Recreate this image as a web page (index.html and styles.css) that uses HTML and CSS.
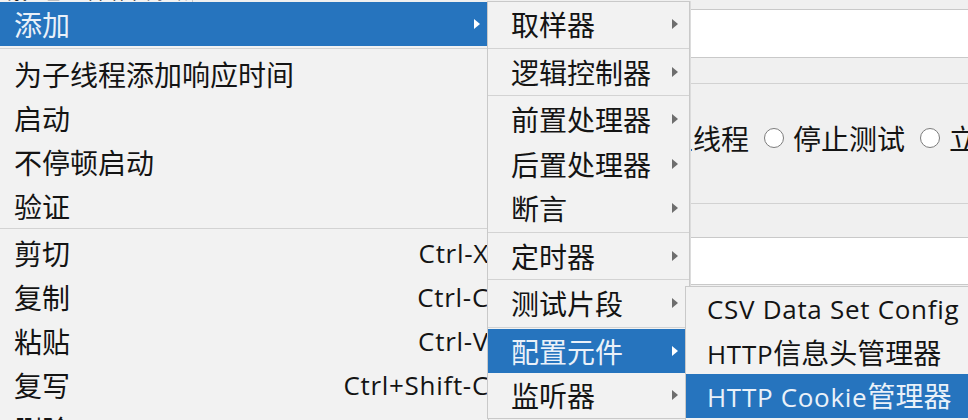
FILE: index.html
```html
<!DOCTYPE html>
<html lang="zh-CN">
<head>
<meta charset="utf-8">
<title>JMeter 菜单</title>
<link rel="stylesheet" href="styles.css">
</head>
<body>
<div class="app">
  <aside class="tree">
    <div class="tree-row"><span class="tree-sel">线程组</span> 查看结果树 编辑器</div>
  </aside>
  <section class="panel">
    <div class="field"></div>
    <div class="actions">
      <div class="radios">
        <label class="opt"><span class="radio"></span>停止线程</label>
        <label class="opt"><span class="radio"></span>停止测试</label>
        <label class="opt"><span class="radio"></span>立即停止测试</label>
      </div>
    </div>
    <div class="field field-2"></div>
  </section>
</div>

<div class="menu menu-main">
  <div class="item sel"><span class="label">添加</span><span class="arrow"></span></div>
  <div class="sep sep-a"></div>
  <div class="item"><span class="label">为子线程添加响应时间</span></div>
  <div class="item"><span class="label">启动</span></div>
  <div class="item"><span class="label">不停顿启动</span></div>
  <div class="item"><span class="label">验证</span></div>
  <div class="sep sep-b"></div>
  <div class="item"><span class="label">剪切</span><span class="key">Ctrl-X</span></div>
  <div class="item"><span class="label">复制</span><span class="key">Ctrl-C</span></div>
  <div class="item"><span class="label">粘贴</span><span class="key">Ctrl-V</span></div>
  <div class="item"><span class="label">复写</span><span class="key">Ctrl+Shift-C</span></div>
  <div class="item"><span class="label">删除</span><span class="key">Delete</span></div>
</div>

<div class="menu menu-sub1">
  <div class="item"><span class="label">取样器</span><span class="arrow"></span></div>
  <div class="sep"></div>
  <div class="item"><span class="label">逻辑控制器</span><span class="arrow"></span></div>
  <div class="sep"></div>
  <div class="item"><span class="label">前置处理器</span><span class="arrow"></span></div>
  <div class="item"><span class="label">后置处理器</span><span class="arrow"></span></div>
  <div class="item"><span class="label">断言</span><span class="arrow"></span></div>
  <div class="sep"></div>
  <div class="item"><span class="label">定时器</span><span class="arrow"></span></div>
  <div class="sep"></div>
  <div class="item"><span class="label">测试片段</span><span class="arrow"></span></div>
  <div class="sep"></div>
  <div class="item sel"><span class="label">配置元件</span><span class="arrow"></span></div>
  <div class="item"><span class="label">监听器</span><span class="arrow"></span></div>
</div>

<div class="menu menu-sub2">
  <div class="item"><span class="label lat">CSV Data Set Config</span></div>
  <div class="item"><span class="label"><span class="lat">HTTP</span>信息头管理器</span></div>
  <div class="item sel"><span class="label"><span class="lat">HTTP Cookie</span>管理器</span></div>
</div>
</body>
</html>
```

FILE: styles.css
```css
html, body {
  margin: 0;
  padding: 0;
}

body {
  width: 968px;
  height: 420px;
  overflow: hidden;
  position: relative;
  background: #f0f0f0;
  font-family: "Noto Sans CJK SC", "Noto Sans", sans-serif;
  color: #141414;
}

/* ---------- background window ---------- */
.app {
  display: flex;
  height: 420px;
}

.tree {
  width: 192px;
  flex: none;
  border-right: 1px solid #c8c8c8;
  background: #f2f2f2;
  overflow: hidden;
}

.tree-row {
  margin-top: -21px;
  font-size: 20px;
  line-height: 24px;
  white-space: nowrap;
  color: #222;
}

.tree-sel {
  font-weight: bold;
}

.panel {
  flex: 1;
  padding-top: 9px;
  overflow: hidden;
  background: #f0f0f0;
}

.field {
  height: 47px;
  margin-left: 10px;
  background: #fff;
  border-top: 1px solid #c9c9c9;
  border-bottom: 1px solid #c9c9c9;
}

.actions {
  margin-top: 25px;
  height: 119px;
  border-top: 1px solid #d2d2d2;
  border-bottom: 1px solid #d2d2d2;
}

.radios {
  display: flex;
  align-items: center;
  padding-top: 40px;
  padding-left: 415px;
  white-space: nowrap;
}

.opt {
  display: flex;
  align-items: center;
  gap: 9px;
  margin-right: 15px;
  font-size: 28px;
  line-height: 28px;
  color: #141414;
}

.radio {
  width: 20px;
  height: 20px;
  box-sizing: border-box;
  border: 1.5px solid #7c7c7c;
  border-radius: 50%;
  background: #fff;
  flex: none;
}

.field-2 {
  margin-top: 33px;
  height: 46px;
}

/* ---------- popup menus ---------- */
.menu {
  position: absolute;
  box-sizing: border-box;
  background: #f2f2f2;
  border: 1px solid #c9c9c9;
  font-size: 28px;
  color: #141414;
}

.item {
  display: flex;
  align-items: center;
  height: 44px;
  line-height: 1;
  white-space: nowrap;
}

.label {
  flex: 1;
}

.lat,
.key {
  font-family: "Open Sans", "Noto Sans", sans-serif;
  font-size: 26px;
  letter-spacing: 0.7px;
}

.key {
  flex: none;
  margin-right: -1px;
}

.arrow {
  flex: none;
  width: 0;
  height: 0;
  border-left: 6px solid #6e6e6e;
  border-top: 5px solid transparent;
  border-bottom: 5px solid transparent;
}

.sel {
  background: #2674be;
  color: #eaf1f9;
}

.sel .arrow {
  border-left-color: #ffffff;
}

.sep {
  position: relative;
  height: 3px;
}

.sep::before {
  content: "";
  position: absolute;
  left: 0;
  right: 0;
  top: 1px;
  height: 1px;
  background: #d3d3d3;
}

/* main menu */
.menu-main {
  left: -1px;
  top: 2px;
  width: 490px;
  height: 440px;
  border-top: none;
}

.menu-main .item {
  padding-left: 14px;
}

.menu-main .arrow {
  margin-right: 8px;
}

.menu-main .sep-a {
  height: 6px;
}

.menu-main .sep-a::before {
  top: 2px;
}

.menu-main .sep-b::before {
  top: 0;
}

/* first submenu */
.menu-sub1 {
  left: 487px;
  top: 1px;
  width: 203px;
  box-shadow: 1px 0 0 #dcdcdc;
}

.menu-sub1 .item {
  height: 44.5px;
  padding-left: 23px;
  padding-right: 11px;
}

/* second submenu */
.menu-sub2 {
  left: 685px;
  top: 286px;
  width: 300px;
  height: 140px;
}

.menu-sub2 .item {
  height: 43.5px;
  padding-left: 21px;
}
```
